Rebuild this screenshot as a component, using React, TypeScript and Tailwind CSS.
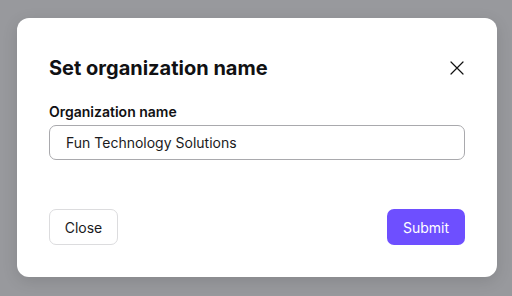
import React from "react";

export default function App() {
  return (
    <div
      className="w-[512px] h-[296px] bg-[#98999d] flex items-start justify-start overflow-hidden"
      style={{ fontFamily: "Inter, 'Noto Sans', sans-serif" }}
    >
      <div className="ml-[17px] mt-[18px] w-[480px] h-[259px] bg-white rounded-[12px] shadow-[0_4px_16px_rgba(0,0,0,0.12)] px-[32px] pt-[32px] flex flex-col">
        <div className="flex items-center justify-between h-[36px]">
          <h2 className="text-[20px] font-bold text-[#111113]">Set organization name</h2>
          <svg width="14" height="14" viewBox="0 0 14 14" className="mr-[1px]">
            <path d="M1 1L13 13M13 1L1 13" stroke="#111" strokeWidth="1.2" strokeLinecap="round" />
          </svg>
        </div>
        <label className="mt-[16px] text-[14px] font-semibold text-[#111113] leading-[20px]">Organization name</label>
        <div className="mt-[3px] h-[35px] border border-[#a9a9ad] rounded-[7px] flex items-center px-[16px] text-[14px] text-[#1a1a1c]">
          Fun Technology Solutions
        </div>
        <div className="mt-auto mb-[32px] flex justify-between">
          <button className="h-[36px] w-[69px] border border-[#dcdcde] rounded-[7px] text-[14px] text-[#1a1a1c] bg-white">
            Close
          </button>
          <button className="h-[36px] w-[78px] rounded-[7px] text-[14px] text-white bg-[#6e4fff]">
            Submit
          </button>
        </div>
      </div>
    </div>
  );
}
